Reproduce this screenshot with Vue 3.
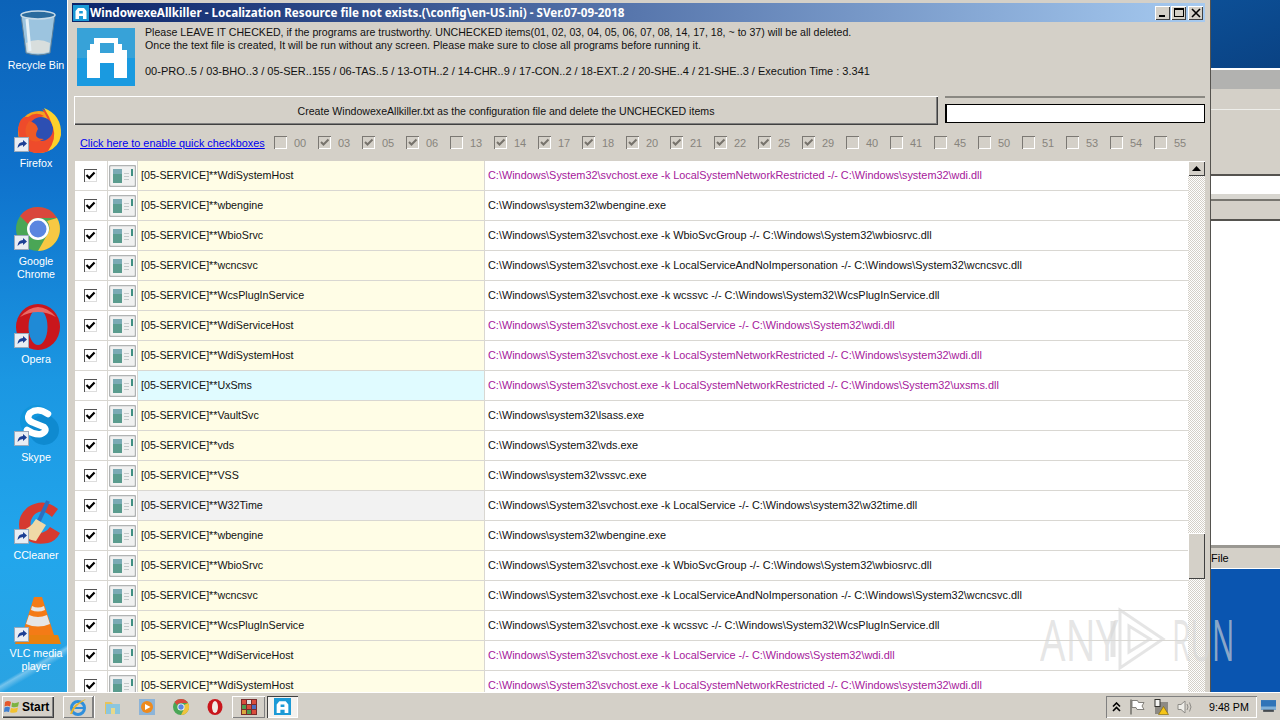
<script setup>
const desktopIcons = [
  { id: 'bin', label: ['Recycle Bin'], top: 0 },
  { id: 'firefox', label: ['Firefox'] },
  { id: 'chrome', label: ['Google', 'Chrome'] },
  { id: 'opera', label: ['Opera'] },
  { id: 'skype', label: ['Skype'] },
  { id: 'ccleaner', label: ['CCleaner'] },
  { id: 'vlc', label: ['VLC media', 'player'] },
]
const quick = [
  ['00', 0], ['03', 1], ['05', 1], ['06', 1], ['13', 0], ['14', 1], ['17', 1], ['18', 1], ['20', 1], ['21', 1], ['22', 1],
  ['25', 1], ['29', 1], ['40', 0], ['41', 0], ['45', 0], ['50', 0], ['51', 0], ['53', 0], ['54', 0], ['55', 0],
].map(([n, c]) => ({ n, c }))
const S32 = 'C:\\Windows\\System32\\'
const s32 = 'C:\\Windows\\system32\\'
const base = [
  ['WdiSystemHost', S32 + 'svchost.exe -k LocalSystemNetworkRestricted -/- ' + s32 + 'wdi.dll', 'y', 1],
  ['wbengine', s32 + 'wbengine.exe', 'y', 0],
  ['WbioSrvc', S32 + 'svchost.exe -k WbioSvcGroup -/- ' + S32 + 'wbiosrvc.dll', 'y', 0],
  ['wcncsvc', S32 + 'svchost.exe -k LocalServiceAndNoImpersonation -/- ' + S32 + 'wcncsvc.dll', 'y', 0],
  ['WcsPlugInService', S32 + 'svchost.exe -k wcssvc -/- ' + S32 + 'WcsPlugInService.dll', 'y', 0],
  ['WdiServiceHost', S32 + 'svchost.exe -k LocalService -/- ' + S32 + 'wdi.dll', 'y', 1],
  ['WdiSystemHost', S32 + 'svchost.exe -k LocalSystemNetworkRestricted -/- ' + s32 + 'wdi.dll', 'y', 1],
  ['UxSms', S32 + 'svchost.exe -k LocalSystemNetworkRestricted -/- ' + S32 + 'uxsms.dll', 'c', 1],
  ['VaultSvc', s32 + 'lsass.exe', 'y', 0],
  ['vds', S32 + 'vds.exe', 'y', 0],
  ['VSS', s32 + 'vssvc.exe', 'y', 0],
  ['W32Time', S32 + 'svchost.exe -k LocalService -/- ' + s32 + 'w32time.dll', 'g', 0],
  ['wbengine', s32 + 'wbengine.exe', 'y', 0],
  ['WbioSrvc', S32 + 'svchost.exe -k WbioSvcGroup -/- ' + S32 + 'wbiosrvc.dll', 'y', 0],
  ['wcncsvc', S32 + 'svchost.exe -k LocalServiceAndNoImpersonation -/- ' + S32 + 'wcncsvc.dll', 'y', 0],
  ['WcsPlugInService', S32 + 'svchost.exe -k wcssvc -/- ' + S32 + 'WcsPlugInService.dll', 'y', 0],
  ['WdiServiceHost', S32 + 'svchost.exe -k LocalService -/- ' + S32 + 'wdi.dll', 'y', 1],
  ['WdiSystemHost', S32 + 'svchost.exe -k LocalSystemNetworkRestricted -/- ' + s32 + 'wdi.dll', 'y', 1],
]
const rows = base.map(([name, path, tone, magenta], i) => ({ key: i, name: '[05-SERVICE]**' + name, path, tone, magenta }))
</script>

<template>
  <div class="screen">
    <div class="upper">
      <aside class="desktop">
        <div v-for="d in desktopIcons" :key="d.id" class="dicon">
          <div class="dpic">
            <svg viewBox="0 0 48 48" width="48" height="48">
              <template v-if="d.id === 'bin'">
                <path d="M7 6 L41 6 L36 44 Q24 48 12 44 Z" fill="#9cc4df" stroke="#5d7f98" />
                <ellipse cx="24" cy="6" rx="17" ry="4" fill="#2a6b9e" stroke="#c8dbe8" stroke-width="1.5" />
                <path d="M12 34 Q24 28 36 34 L35 43 Q24 46 13 43 Z" fill="#d8dedd" />
                <path d="M13 10 L16 42" stroke="#e6f1f7" stroke-width="3" fill="none" />
              </template>
              <template v-else-if="d.id === 'firefox'">
                <circle cx="25" cy="25" r="21" fill="#f6a21e" />
                <path d="M4 22 Q6 8 14 10 Q22 4 30 9 Q18 12 20 18 Q14 30 26 33 Q38 32 36 20 Q34 10 28 2 Q48 10 46 28 Q42 46 24 46 Q6 46 4 22Z" fill="#ee4b2b" />
                <circle cx="27" cy="22" r="12" fill="#2d4fb3" />
                <path d="M30 1 Q48 8 47 28 Q45 40 34 44 Q43 32 39 20 Q36 10 30 1Z" fill="#fcd12a" />
                <path d="M15 14 Q23 16 24 22 Q18 32 30 32 Q20 38 13 30 Q9 22 15 14Z" fill="#ef5a26" />
              </template>
              <template v-else-if="d.id === 'chrome'">
                <circle cx="24" cy="24" r="22" fill="#4aa656" />
                <path d="M24 2 A22 22 0 0 1 43 13 L24 13 A11 11 0 0 0 14 19 L6 11 A22 22 0 0 1 24 2Z" fill="#d9473c" />
                <path d="M43 13 A22 22 0 0 1 24 46 L33 30 A11 11 0 0 0 33 16 Z" fill="#f7c843" />
                <circle cx="24" cy="24" r="11" fill="#fff" />
                <circle cx="24" cy="24" r="8.5" fill="#5a86e0" />
              </template>
              <template v-else-if="d.id === 'opera'">
                <ellipse cx="24" cy="24" rx="22" ry="23" fill="#c9161c" />
                <ellipse cx="24" cy="24" rx="9.5" ry="18" fill="#1f8ad6" />
                <path d="M6 14 Q24 -6 42 14 Q24 4 6 14Z" fill="#e96a66" />
              </template>
              <template v-else-if="d.id === 'skype'">
                <circle cx="22" cy="20" r="16" fill="#1296dc" />
                <circle cx="30" cy="29" r="15" fill="#0f8ad0" />
                <path d="M34 13 Q24 6 16 12 Q11 19 20 22 L30 26 Q34 30 27 33 Q20 34 13 29" fill="none" stroke="#fff" stroke-width="6.5" stroke-linecap="round" />
              </template>
              <template v-else-if="d.id === 'ccleaner'">
                <path d="M44 10 Q30 -2 14 8 Q2 18 6 32 Q14 48 34 44 Q42 42 46 34 L36 28 Q30 36 22 33 Q12 26 20 16 Q28 8 38 18 Z" fill="#d63a2f" />
                <path d="M34 2 L24 24" stroke="#2c6fc0" stroke-width="4" />
                <path d="M22 20 L32 26 L22 42 Q10 40 6 32 Q16 30 22 20Z" fill="#efd9a7" />
              </template>
              <template v-else>
                <path d="M20 0 Q24 -2 28 0 L40 38 L8 38Z" fill="#f47b16" />
                <path d="M15 18 Q24 22 33 18 L36 27 Q24 32 12 27Z" fill="#e6e6e6" />
                <path d="M18 9 Q24 12 30 9 L31 13 Q24 16 17 13Z" fill="#e6e6e6" />
                <path d="M4 38 L44 38 L47 47 L1 47Z" fill="#e8810f" />
              </template>
            </svg>
            <svg v-if="d.id !== 'bin'" class="shortcut" viewBox="0 0 15 15" width="15" height="15">
              <rect x="0.5" y="0.5" width="14" height="14" fill="#e9edf3" stroke="#9aa9bb" />
              <path d="M3.5 11 Q4 5 9 5 L9 3 L13 6.5 L9 10 L9 8 Q6 8 3.5 11Z" fill="#1c3f94" />
            </svg>
          </div>
          <div class="dlabel"><div v-for="l in d.label" :key="l">{{ l }}</div></div>
        </div>
      </aside>

      <section class="window">
        <header class="titlebar">
          <svg class="ticon" viewBox="0 0 16 16" width="16" height="16">
            <rect width="16" height="16" fill="#1b9ad6" />
            <path d="M2.5 14 V6 L5 3 H11 L13.5 6 V14 H10 V11 H6 V14Z M6.2 8.5 H9.8 V6 H6.2Z" fill="#fff" fill-rule="evenodd" />
          </svg>
          <span class="ttext">WindowexeAllkiller - Localization Resource file not exists.(\config\en-US.ini) - SVer.07-09-2018</span>
          <div class="tbtns">
            <span class="tbtn"><svg viewBox="0 0 14 12" width="14" height="12"><rect x="3" y="8" width="6" height="2" fill="#000" /></svg></span>
            <span class="tbtn"><svg viewBox="0 0 14 12" width="14" height="12"><rect x="2.5" y="1.5" width="9" height="8" fill="none" stroke="#000" /><rect x="2" y="1" width="10" height="2" fill="#000" /></svg></span>
            <span class="tbtn close"><svg viewBox="0 0 14 12" width="14" height="12"><path d="M3 2 L11 10 M11 2 L3 10" stroke="#000" stroke-width="1.6" /></svg></span>
          </div>
        </header>

        <div class="info">
          <svg class="logo" viewBox="0 0 58 58" width="58" height="58">
            <rect width="58" height="58" fill="#37a2d8" />
            <rect y="30" width="58" height="28" fill="#1a9ae0" />
            <path d="M10 50 V22 H13 V16 H17 V10 H41 V16 H45 V22 H50 V50 H37 V35 H23 V50Z M23 15 V25 H37 V15Z" fill="#fff" fill-rule="evenodd" />
          </svg>
          <div class="itext">
            <p>Please LEAVE IT CHECKED, if the programs are trustworthy. UNCHECKED items(01, 02, 03, 04, 05, 06, 07, 08, 14, 17, 18, ~ to 37) will be all deleted.</p>
            <p>Once the text file is created, It will be run without any screen. Please make sure to close all programs before running it.</p>
            <p class="stats">00-PRO..5 / 03-BHO..3 / 05-SER..155 / 06-TAS..5 / 13-OTH..2 / 14-CHR..9 / 17-CON..2 / 18-EXT..2 / 20-SHE..4 / 21-SHE..3 / Execution Time : 3.341</p>
          </div>
        </div>

        <div class="actions">
          <button class="create">Create WindowexeAllkiller.txt as the configuration file and delete the UNCHECKED items</button>
          <div class="inputwrap"><div class="input"></div></div>
        </div>

        <div class="quick">
          <a class="qlink">Click here to enable quick checkboxes</a>
          <div class="qitems">
            <div v-for="q in quick" :key="q.n" class="qitem">
              <span class="qbox">
                <svg v-if="q.c" viewBox="0 0 11 11" width="11" height="11"><path d="M2 5 L4.5 7.5 L9.5 2.5" fill="none" stroke="#77736c" stroke-width="2" /></svg>
              </span>
              <span class="qnum">{{ q.n }}</span>
            </div>
          </div>
        </div>

        <div class="listwrap">
          <div class="list">
            <div v-for="r in rows" :key="r.key" class="row">
              <div class="ccheck">
                <span class="cbox"><svg viewBox="0 0 11 11" width="11" height="11"><path d="M1.5 5 L4.3 8 L9.5 2.5" fill="none" stroke="#000" stroke-width="2.2" /></svg></span>
              </div>
              <div class="cicon">
                <svg viewBox="0 0 27 22" width="27" height="22">
                  <rect x="0.5" y="0.5" width="26" height="21" rx="1.5" fill="#f0f1f1" stroke="#b0b3b3" stroke-width="1.4" />
                  <rect x="4" y="4" width="9" height="14" fill="#5a9c8e" />
                  <rect x="4" y="4" width="9" height="5" fill="#7aaab4" />
                  <rect x="15" y="8" width="5" height="1" fill="#c4c9c9" />
                  <rect x="15" y="11" width="5" height="1" fill="#c4c9c9" />
                  <rect x="15" y="14" width="5" height="1" fill="#c4c9c9" />
                  <rect x="22" y="4" width="2" height="7" fill="#3f8f82" />
                </svg>
              </div>
              <div class="cname" :class="r.tone">{{ r.name }}</div>
              <div class="cpath" :class="{ magenta: r.magenta }">{{ r.path }}</div>
            </div>
          </div>
          <div class="sbar">
            <span class="sup"><svg viewBox="0 0 9 5" width="9" height="5"><path d="M0 5 L4.5 0 L9 5Z" fill="#000" /></svg></span>
            <span class="strack1"></span>
            <span class="sthumb"></span>
            <span class="strack2"></span>
          </div>
        </div>
      </section>

      <aside class="behind">
        <div class="b-blue1"></div>
        <div class="b-head"></div>
        <div class="b-menu"></div>
        <div class="b-white1"></div>
        <div class="b-tool"></div>
        <div class="b-band"></div>
        <div class="b-white2"></div>
        <div class="b-file">File</div>
        <div class="b-blue2"></div>
      </aside>
    </div>

    <footer class="taskbar">
      <button class="start">
        <svg viewBox="0 0 16 14" width="16" height="14">
          <path d="M1 2 Q4 0 7 2 L6 6.5 Q3.5 5 0.5 6.5Z" fill="#e5582b" />
          <path d="M8 2.5 Q11 4 15 2 L14 6.5 Q11 8 7.5 6.8Z" fill="#7cb342" />
          <path d="M0.5 7.5 Q3.5 6 6 7.5 L5 12 Q2.5 10.8 0 12Z" fill="#3f7fd0" />
          <path d="M7 8 Q10 9 14 7.5 L13 12 Q10 13.5 6 12.2Z" fill="#f2c230" />
        </svg>
        <span>Start</span>
      </button>
      <span class="tb raised ie">
        <svg viewBox="0 0 20 20" width="20" height="20">
          <circle cx="10" cy="11" r="6.5" fill="none" stroke="#2f8fdc" stroke-width="3" />
          <rect x="4" y="10" width="12" height="2" fill="#2f8fdc" />
          <path d="M2 17 Q5 6 18 2 Q16 4 14 5 Q7 9 4 17Z" fill="#e8b52b" />
        </svg>
      </span>
      <span class="sep"></span>
      <span class="tb">
        <svg viewBox="0 0 20 20" width="20" height="20">
          <path d="M2 5 H8 L10 7 H16 V17 H2Z" fill="#e8c35a" />
          <rect x="3" y="7" width="14" height="10" fill="#8bc6de" />
          <rect x="8" y="11" width="4" height="6" fill="#e8d88a" />
        </svg>
      </span>
      <span class="tb">
        <svg viewBox="0 0 20 20" width="20" height="20">
          <rect x="2" y="2" width="16" height="16" fill="#8cb4d8" />
          <circle cx="10" cy="10" r="6" fill="#ee8a1d" />
          <path d="M8 7 L13.5 10 L8 13Z" fill="#fff" />
        </svg>
      </span>
      <span class="tb">
        <svg viewBox="0 0 20 20" width="20" height="20">
          <circle cx="10" cy="10" r="8" fill="#4aa656" />
          <path d="M10 2 A8 8 0 0 1 17 6 H10 A4 4 0 0 0 6 8 L3.5 5 A8 8 0 0 1 10 2Z" fill="#d9473c" />
          <path d="M17 6 A8 8 0 0 1 10 18 L13 12 A4 4 0 0 0 13 8Z" fill="#f0c33c" />
          <circle cx="10" cy="10" r="3.6" fill="#fff" />
          <circle cx="10" cy="10" r="2.7" fill="#5a86e0" />
        </svg>
      </span>
      <span class="tb">
        <svg viewBox="0 0 20 20" width="20" height="20">
          <ellipse cx="10" cy="10" rx="7.5" ry="8" fill="#c9161c" />
          <ellipse cx="10" cy="10" rx="3" ry="6" fill="#f0ece6" />
        </svg>
      </span>
      <span class="tb raised rar">
        <svg viewBox="0 0 20 20" width="20" height="20">
          <rect x="2" y="2" width="16" height="16" fill="#7a2c2c" />
          <rect x="3" y="3" width="4" height="4" fill="#d94d3d" /><rect x="8" y="3" width="4" height="4" fill="#e0e0e0" /><rect x="13" y="3" width="4" height="4" fill="#d94d3d" />
          <rect x="3" y="8" width="4" height="4" fill="#4d9e52" /><rect x="8" y="8" width="4" height="4" fill="#d94d3d" /><rect x="13" y="8" width="4" height="4" fill="#4d6ec0" />
          <rect x="3" y="13" width="4" height="4" fill="#d9a83d" /><rect x="8" y="13" width="4" height="4" fill="#4d9e52" /><rect x="13" y="13" width="4" height="4" fill="#d94d3d" />
        </svg>
      </span>
      <span class="tb active">
        <svg viewBox="0 0 16 16" width="17" height="17">
          <rect width="16" height="16" fill="#1b9ad6" />
          <path d="M2.5 14 V6 L5 3 H11 L13.5 6 V14 H10 V11 H6 V14Z M6.2 8.5 H9.8 V6 H6.2Z" fill="#fff" fill-rule="evenodd" />
        </svg>
      </span>
      <div class="tray">
        <svg viewBox="0 0 9 10" width="9" height="10"><path d="M1 4.5 L4.5 1 L8 4.5 M1 9 L4.5 5.5 L8 9" fill="none" stroke="#000" stroke-width="1.6" /></svg>
        <svg viewBox="0 0 16 16" width="16" height="16"><path d="M2 0.5 V15.5" stroke="#77756f" stroke-width="1.6" /><path d="M3 1.5 H8.5 L9.5 3.5 H15 L13 7 L15 10.5 H8 L7 8.5 H3Z" fill="#fff" stroke="#77756f" stroke-width=".9" /></svg>
        <svg viewBox="0 0 16 16" width="16" height="16"><rect x="2" y="3" width="13" height="12" fill="#8d8a84" /><rect x="2" y="0.5" width="5" height="7" fill="#f4f4f2" stroke="#33322f" /><path d="M10.5 7.5 L15.5 15.5 H5.5Z" fill="#f5c518" stroke="#7a6100" stroke-width=".6" /></svg>
        <svg viewBox="0 0 16 16" width="16" height="16"><path d="M1 5.5 H4 L8 2 V14 L4 10.5 H1Z" fill="#efeee9" stroke="#8e8c87" /><path d="M10 5 Q12 8 10 11 M12.5 3.5 Q15.5 8 12.5 12.5" fill="none" stroke="#8e8c87" /></svg>
        <span class="clock">9:48 PM</span>
      </div>
      <svg class="showdesk" viewBox="0 0 14 12" width="15" height="13"><rect width="14" height="9" fill="#2f74b8" /><rect y="6" width="14" height="3" fill="#7fb0d8" /><rect x="2" y="9" width="10" height="2" fill="#44494f" /></svg>
    </footer>

    <div class="watermark">
      <span class="wm any">ANY</span>
      <svg class="wmplay" viewBox="0 0 56 64" width="56" height="64">
        <path d="M3 14 V50" fill="none" stroke="currentColor" stroke-width="5" />
        <path d="M10 3 L53 32 L10 61 Z" fill="none" stroke="currentColor" stroke-width="3" />
        <path d="M19 19 L40 32 L19 45 Z" fill="none" stroke="currentColor" stroke-width="3" />
      </svg>
      <span class="wm run">RUN</span>
    </div>
  </div>
</template>

<style>
html, body { margin: 0; padding: 0; overflow: hidden; }
</style>

<style scoped>
.screen { position: relative; width: 1280px; height: 720px; overflow: hidden; display: flex; flex-direction: column; font-family: "Liberation Sans", "Noto Sans", sans-serif; font-size: 11px; color: #000; background: #d4d0c8; }
.upper { flex: 1 1 auto; display: flex; min-height: 0; }

.desktop { width: 68px; flex: none; box-sizing: border-box; padding-top: 9px; display: flex; flex-direction: column; background:
  linear-gradient(150deg, transparent 0 93.5%, rgba(255,255,255,.35) 94%, transparent 95%),
  linear-gradient(180deg, #0c63b8 0%, #0f72cc 25%, #1b97e2 55%, #22a6ec 80%, #2aa3e2 100%); border-right: 1px solid #fff; }
.dicon { height: 98px; flex: none; display: flex; flex-direction: column; align-items: center; color: #fff; }
.dpic { position: relative; width: 48px; height: 48px; margin-left: 8px; }
.dpic > svg:first-child { display: block; }
.shortcut { position: absolute; left: 0; bottom: 3px; display: block; }
.dlabel { margin-top: 2px; padding-left: 5px; font-size: 10.7px; text-align: center; line-height: 13px; white-space: nowrap; }

.window { width: 1143px; flex: none; box-sizing: border-box; padding: 3px 5px 0 3px; background: #d4d0c8; display: flex; flex-direction: column; border-left: 1px solid #d4d0c8; border-right: 1px solid #55534f; min-height: 0; overflow: hidden; }
.titlebar { height: 19px; flex: none; display: flex; align-items: center; padding: 0 2px 0 1px; background: linear-gradient(90deg, #0a246a, #a6caf0); color: #fff; }
.ticon { flex: none; margin-right: 1px; }
.ttext { font-family: "Noto Sans", sans-serif; font-weight: 700; white-space: nowrap; font-size: 11.65px; }
.tbtns { margin-left: auto; display: flex; }
.tbtn { width: 15px; height: 14px; margin-left: 1px; display: flex; align-items: center; justify-content: center; background: #d4d0c8; box-shadow: inset 1px 1px 0 #fff, inset -1px -1px 0 #404040; }
.tbtn.close { margin-left: 2px; }
.tbtn svg { display: block; }

.info { height: 74px; flex: none; display: flex; padding: 3px 0 0 5px; box-sizing: border-box; }
.logo { flex: none; margin-top: 3px; }
.itext { margin-left: 10px; padding-top: 1px; line-height: 13px; color: #111; font-size: 10.6px; }
.itext p { margin: 0; white-space: nowrap; }
.itext .stats { margin-top: 13px; font-size: 11px; }

.actions { height: 33px; flex: none; display: flex; padding: 0 0 0 2px; }
.create { width: 864px; height: 29px; font: inherit; font-size: 10.6px; padding: 0; background: #d4d0c8; border: 0; box-shadow: inset 1px 1px 0 #fff, inset -1px -1px 0 #404040, inset -2px -2px 0 #808080; color: #111; }
.inputwrap { margin-left: 7px; width: 260px; box-sizing: border-box; border-top: 2px solid #8a8882; height: 30px; padding-top: 6px; }
.input { height: 19px; box-sizing: border-box; background: #fff; border: 1px solid #000; border-left-width: 2px; }

.quick { height: 32px; flex: none; display: flex; align-items: center; box-sizing: border-box; padding: 0 0 5px 8px; }
.qlink { color: #0000ee; text-decoration: underline; white-space: nowrap; width: 194px; flex: none; font-size: 10.87px; }
.qitems { display: flex; }
.qitem { width: 44px; display: flex; align-items: center; }
.qbox { width: 13px; height: 13px; box-sizing: border-box; background: #d4d0c8; box-shadow: inset 1px 1px 0 #7b7873, inset -1px -1px 0 #fff; display: flex; align-items: center; justify-content: center; }
.qbox svg { display: block; }
.qnum { margin-left: 7px; color: #87847d; }

.listwrap { flex: 1 1 auto; min-height: 0; display: flex; padding-left: 3px; }
.list { width: 1113px; flex: none; background: #fff; overflow: hidden; }
.row { height: 30px; display: flex; box-sizing: border-box; border-bottom: 1px solid #d9d7d2; }
.ccheck { width: 33px; flex: none; display: flex; align-items: center; justify-content: center; border-right: 1px solid #d9d7d2; padding: 0 1px 1px 0; box-sizing: border-box; }
.cbox { width: 13px; height: 13px; box-sizing: border-box; background: #fff; box-shadow: inset 1px 1px 0 #555, inset -1px -1px 0 #ddd; display: flex; align-items: center; justify-content: center; }
.cbox svg { display: block; }
.cicon { width: 30px; flex: none; display: flex; align-items: center; justify-content: center; border-right: 1px solid #d9d7d2; box-sizing: border-box; padding-top: 1px; }
.cicon svg { display: block; }
.cname { width: 347px; flex: none; box-sizing: border-box; padding-left: 3px; line-height: 29px; border-right: 1px solid #d9d7d2; white-space: nowrap; color: #111; font-size: 10.7px; }
.cname.y { background: #fffde6; }
.cname.c { background: #e0fbff; }
.cname.g { background: #f2f2f2; }
.cpath { flex: 1 1 auto; padding-left: 3px; line-height: 29px; white-space: nowrap; color: #111; font-size: 10.9px; }
.cpath.magenta { color: #a5189b; }

.sbar { width: 17px; flex: none; display: flex; flex-direction: column; background-color: #eae8e3; background-image: repeating-conic-gradient(#d4d0c8 0 25%, #ffffff 0 50%); background-size: 2px 2px; }
.sup { height: 15px; flex: none; display: flex; align-items: center; justify-content: center; background: #d4d0c8; box-shadow: inset 1px 1px 0 #fff, inset -1px -1px 0 #404040; }
.sup svg { display: block; }
.strack1 { height: 357px; flex: none; }
.sthumb { height: 46px; flex: none; background: #d4d0c8; box-shadow: inset 1px 1px 0 #fff, inset -1px -1px 0 #404040; }
.strack2 { flex: 1; }

.behind { flex: 1 1 auto; display: flex; flex-direction: column; min-width: 0; }
.b-blue1 { height: 68px; flex: none; background: linear-gradient(160deg, #0c4f96, #0a4283); border-bottom: 2px solid #fff; }
.b-head { height: 19px; flex: none; background: #b2b2b0; }
.b-menu { height: 20px; flex: none; background: #d4d0c8; border-bottom: 1px solid #eeeeea; }
.b-white1 { height: 64px; flex: none; background: #d4d0c8; border-bottom: 2px solid #55534f; }
.b-tool { height: 18px; flex: none; background: #fff; border-bottom: 5px solid #d8d6d0; }
.b-band { height: 18px; flex: none; background: #d4d0c8; border-top: 2px solid #77756f; border-bottom: 2px solid #55534f; }
.b-white2 { flex: 1 1 auto; background: #fff; }
.b-file { height: 20px; flex: none; background: #d4d0c8; border-top: 3px solid #9a9892; line-height: 20px; overflow: hidden; white-space: nowrap; }
.b-blue2 { height: 124px; flex: none; background: #0a55b0; border-top: 1px solid #fff; box-sizing: border-box; }

.taskbar { position: relative; height: 28px; flex: none; display: flex; align-items: center; padding: 0 3px 0 2px; box-sizing: border-box; background: #d4d0c8; border-top: 1px solid #fff; }
.start { width: 52px; height: 22px; flex: none; padding: 0 0 0 2px; display: flex; align-items: center; gap: 2px; font: 700 12px "Liberation Sans", sans-serif; background: #d4d0c8; border: 0; box-shadow: inset 1px 1px 0 #fff, inset -1px -1px 0 #404040, inset -2px -2px 0 #808080; color: #000; }
.sep { width: 2px; height: 22px; margin: 0 1px 0 0; flex: none; background: linear-gradient(90deg, #808080 50%, #fff 50%); }
.tb { width: 34px; height: 22px; display: flex; align-items: center; justify-content: center; flex: none; }
.tb.ie { width: 30px; margin-left: 9px; }
.tb.rar { width: 33px; }
.tb.raised { box-shadow: inset 1px 1px 0 #fff, inset -1px -1px 0 #808080; }
.tb.active { width: 31px; margin-left: 2px; background: #f4f2ee; box-shadow: inset 1px 1px 0 #404040, inset -1px -1px 0 #fff; }
.tb svg { display: block; }
.tray { margin-left: auto; width: 151px; height: 22px; flex: none; box-sizing: border-box; display: flex; align-items: center; gap: 8px; padding-left: 6px; box-shadow: inset 1px 1px 0 #808080, inset -1px -1px 0 #fff; }
.tray svg { display: block; flex: none; }
.clock { white-space: nowrap; margin-left: 8px; font-size: 10.7px; }
.showdesk { flex: none; margin: 0 1px 0 4px; }

.watermark { position: absolute; left: 1040px; top: 607px; width: 190px; height: 64px; display: flex; align-items: center; color: rgba(215, 215, 215, .65); pointer-events: none; }
.wm { display: inline-block; font: 400 56px/64px "Open Sans", sans-serif; transform-origin: left center; white-space: nowrap; flex: none; }
.any { width: 70px; transform: scaleX(.72); }
.run { width: 58px; margin-left: 6px; transform: scaleX(.53); }
.wmplay { display: block; flex: none; }
</style>
